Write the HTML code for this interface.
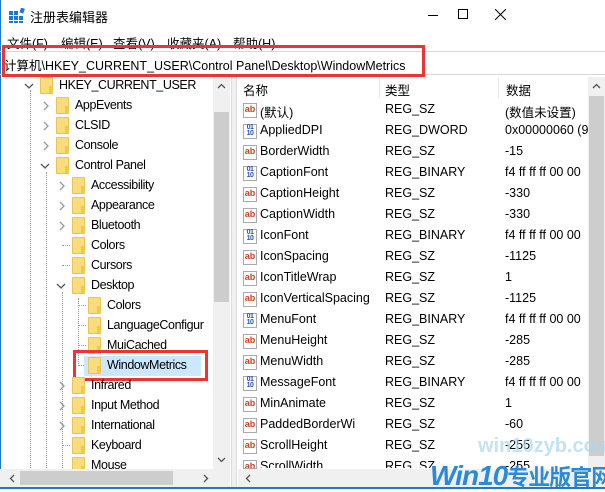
<!DOCTYPE html>
<html><head><meta charset="utf-8"><style>
*{margin:0;padding:0;box-sizing:border-box}
body{width:605px;height:489px;overflow:hidden;background:#fff;font-family:"Liberation Sans","Noto Sans CJK SC",sans-serif;font-size:12.5px;color:#000;position:relative}
.a{position:absolute;white-space:nowrap}
.t{letter-spacing:-0.4px}
.fold{position:absolute;width:13px;height:17px;background:#f8dc7e;border:1px solid #e8c35a;border-radius:1px}
.fold:after{content:"";position:absolute;right:-1px;bottom:-1px;width:4px;height:8px;background:#f0c850;}
.ic{position:absolute;width:14px;height:15px;border:1px solid #aaa;background:#fff;font-size:9px;font-weight:bold;line-height:11px;text-align:center}
.ab{color:#d04020}
.bn{color:#2050c0;font-size:7px;line-height:6px;letter-spacing:-0.5px}
</style></head><body>
<svg width="0" height="0" style="position:absolute"><defs>
<symbol id="cr" viewBox="0 0 10 10"><path d="M3 1L7 5L3 9" fill="none" stroke="#999" stroke-width="1.3"/></symbol>
<symbol id="cd" viewBox="0 0 10 10"><path d="M1 3L5 7L9 3" fill="none" stroke="#555" stroke-width="1.3"/></symbol>
</defs></svg>
<div class="a" style="left:0;top:0;width:1px;height:489px;background:#1a78d0"></div>
<div class="a" style="left:0;top:487px;width:605px;height:2px;background:#1a78d0"></div>
<!-- title -->
<svg class="a" style="left:9px;top:8px" width="16" height="15"><g fill="#1a7ad0"><rect x="0" y="3" width="4" height="4"/><rect x="5" y="3" width="4" height="4"/><rect x="0" y="8" width="4" height="4"/><rect x="5" y="8" width="4" height="4"/><rect x="10" y="8" width="4" height="4"/><rect x="0" y="13" width="4" height="2"/><rect x="5" y="13" width="4" height="2"/><rect x="10" y="13" width="4" height="2"/><rect x="11" y="0" width="4" height="5" transform="rotate(20 13 3)"/></g></svg>
<div class="a" style="left:30px;top:7px;font-size:13px">注册表编辑器</div>
<div class="a" style="left:428px;top:15px;width:10px;height:1px;background:#000"></div>
<div class="a" style="left:458px;top:9px;width:10px;height:10px;border:1px solid #000"></div>
<svg class="a" style="left:495px;top:9px" width="11" height="11"><path d="M0 0L11 11M11 0L0 11" stroke="#000"/></svg>
<!-- menu -->
<div class="a" style="left:7px;top:33px">文件(F)</div>
<div class="a" style="left:61px;top:33px">编辑(E)</div>
<div class="a" style="left:113px;top:33px">查看(V)</div>
<div class="a" style="left:167px;top:33px">收藏夹(A)</div>
<div class="a" style="left:233px;top:33px">帮助(H)</div>
<!-- address -->
<div class="a" style="left:0;top:51px;width:605px;height:24px;border-top:1px solid #d8d8d8;border-bottom:1px solid #d8d8d8"></div>
<div class="a" style="left:4px;top:55px;font-size:12.5px">计算机\HKEY_CURRENT_USER\Control Panel\Desktop\WindowMetrics</div>
<div class="a" style="left:2px;top:45px;width:423px;height:32px;border:3px solid #ee3333"></div>
<!-- splitter -->
<div class="a" style="left:231px;top:77px;width:6px;height:410px;background:#f0f0f0;border-left:1px solid #ddd;border-right:1px solid #ddd"></div>
<!-- tree -->
<div class="a" style="left:30px;top:90px;height:380px;border-left:1px dotted #999"></div>
<div class="a" style="left:46px;top:172px;height:300px;border-left:1px dotted #999"></div>
<div class="a" style="left:62px;top:292px;height:180px;border-left:1px dotted #999"></div>
<div class="a" style="left:78px;top:298px;height:68px;border-left:1px dotted #999"></div>
<div class="a" style="left:62px;top:245px;width:8px;border-top:1px dotted #999"></div>
<div class="a" style="left:62px;top:265px;width:8px;border-top:1px dotted #999"></div>
<div class="a" style="left:62px;top:445px;width:8px;border-top:1px dotted #999"></div>
<div class="a" style="left:78px;top:305px;width:8px;border-top:1px dotted #999"></div>
<div class="a" style="left:78px;top:325px;width:8px;border-top:1px dotted #999"></div>
<div class="a" style="left:78px;top:345px;width:8px;border-top:1px dotted #999"></div>
<div class="a" style="left:78px;top:365px;width:6px;border-top:1px dotted #999"></div>

<svg class="a" style="left:24px;top:81px" width="10" height="10"><use href="#cd"/></svg><div class="fold" style="left:40px;top:77px"></div><div class="a t" style="left:59px;top:78px">HKEY_CURRENT_USER</div>
<svg class="a" style="left:41px;top:101px" width="10" height="10"><use href="#cr"/></svg><div class="fold" style="left:56px;top:97px"></div><div class="a t" style="left:75px;top:98px">AppEvents</div>
<svg class="a" style="left:41px;top:121px" width="10" height="10"><use href="#cr"/></svg><div class="fold" style="left:56px;top:117px"></div><div class="a t" style="left:75px;top:118px">CLSID</div>
<svg class="a" style="left:41px;top:141px" width="10" height="10"><use href="#cr"/></svg><div class="fold" style="left:56px;top:137px"></div><div class="a t" style="left:75px;top:138px">Console</div>
<svg class="a" style="left:40px;top:161px" width="10" height="10"><use href="#cd"/></svg><div class="fold" style="left:56px;top:157px"></div><div class="a t" style="left:75px;top:158px">Control Panel</div>
<svg class="a" style="left:57px;top:181px" width="10" height="10"><use href="#cr"/></svg><div class="fold" style="left:72px;top:177px"></div><div class="a t" style="left:91px;top:178px">Accessibility</div>
<svg class="a" style="left:57px;top:201px" width="10" height="10"><use href="#cr"/></svg><div class="fold" style="left:72px;top:197px"></div><div class="a t" style="left:91px;top:198px">Appearance</div>
<svg class="a" style="left:57px;top:221px" width="10" height="10"><use href="#cr"/></svg><div class="fold" style="left:72px;top:217px"></div><div class="a t" style="left:91px;top:218px">Bluetooth</div>
<div class="fold" style="left:72px;top:237px"></div><div class="a t" style="left:91px;top:238px">Colors</div>
<div class="fold" style="left:72px;top:257px"></div><div class="a t" style="left:91px;top:258px">Cursors</div>
<svg class="a" style="left:56px;top:281px" width="10" height="10"><use href="#cd"/></svg><div class="fold" style="left:72px;top:277px"></div><div class="a t" style="left:91px;top:278px">Desktop</div>
<div class="fold" style="left:88px;top:297px"></div><div class="a t" style="left:107px;top:298px">Colors</div>
<div class="fold" style="left:88px;top:317px"></div><div class="a t" style="left:107px;top:318px;width:106px;overflow:hidden">LanguageConfigur</div>
<div class="fold" style="left:88px;top:337px"></div><div class="a t" style="left:107px;top:338px">MuiCached</div>
<div class="a" style="left:84px;top:356px;width:117px;height:20px;background:#cce8ff"></div>
<div class="fold" style="left:88px;top:357px"></div><div class="a t" style="left:107px;top:358px">WindowMetrics</div>
<div class="a" style="left:73px;top:350px;width:135px;height:31px;border:3px solid #ee3333"></div>
<svg class="a" style="left:57px;top:381px" width="10" height="10"><use href="#cr"/></svg><div class="fold" style="left:72px;top:377px"></div><div class="a t" style="left:91px;top:378px">Infrared</div>
<svg class="a" style="left:57px;top:401px" width="10" height="10"><use href="#cr"/></svg><div class="fold" style="left:72px;top:397px"></div><div class="a t" style="left:91px;top:398px">Input Method</div>
<svg class="a" style="left:57px;top:421px" width="10" height="10"><use href="#cr"/></svg><div class="fold" style="left:72px;top:417px"></div><div class="a t" style="left:91px;top:418px">International</div>
<div class="fold" style="left:72px;top:437px"></div><div class="a t" style="left:91px;top:438px">Keyboard</div>
<div class="fold" style="left:72px;top:457px"></div><div class="a t" style="left:91px;top:458px;height:11px;overflow:hidden">Mouse</div>
<!-- left scrollbar -->
<div class="a" style="left:213px;top:77px;width:17px;height:392px;background:#f0f0f0"></div>
<div class="a" style="left:214px;top:112px;width:15px;height:190px;background:#cdcdcd"></div>
<svg class="a" style="left:217px;top:82px" width="9" height="9"><path d="M1 6L4.5 2.5L8 6" fill="none" stroke="#555" stroke-width="1.3"/></svg>
<svg class="a" style="left:217px;top:455px" width="9" height="9"><path d="M1 3L4.5 6.5L8 3" fill="none" stroke="#555" stroke-width="1.3"/></svg>
<div class="a" style="left:0;top:469px;width:230px;height:18px;background:#f0f0f0"></div>
<div class="a" style="left:20px;top:471px;width:153px;height:14px;background:#cdcdcd"></div>
<svg class="a" style="left:8px;top:474px" width="9" height="9"><path d="M6 1L2.5 4.5L6 8" fill="none" stroke="#555" stroke-width="1.3"/></svg>
<svg class="a" style="left:201px;top:474px" width="9" height="9"><path d="M3 1L6.5 4.5L3 8" fill="none" stroke="#555" stroke-width="1.3"/></svg>
<!-- right header -->
<div class="a" style="left:243px;top:80px">名称</div>
<div class="a" style="left:379px;top:78px;width:1px;height:20px;background:#e5e5e5"></div>
<div class="a" style="left:385px;top:80px">类型</div>
<div class="a" style="left:498px;top:78px;width:1px;height:20px;background:#e5e5e5"></div>
<div class="a" style="left:506px;top:80px">数据</div>
<div id="rows"></div>
<!-- right scrollbar -->
<div class="a" style="left:588px;top:77px;width:17px;height:392px;background:#f0f0f0"></div>
<div class="a" style="left:589px;top:96px;width:15px;height:360px;background:#cdcdcd"></div>
<svg class="a" style="left:592px;top:82px" width="9" height="9"><path d="M1 6L4.5 2.5L8 6" fill="none" stroke="#555" stroke-width="1.3"/></svg>
<div class="a" style="left:238px;top:469px;width:367px;height:18px;background:#f0f0f0"></div>
<svg class="a" style="left:244px;top:474px" width="9" height="9"><path d="M6 1L2.5 4.5L6 8" fill="none" stroke="#555" stroke-width="1.3"/></svg>
<!-- watermark -->
<div class="a" style="left:478px;top:435px;font-size:20px;font-weight:bold;color:#a8d8f0;opacity:.7">win10zyb.com</div>
<div class="a" style="left:430px;top:460px;font-size:28px;font-weight:bold;font-style:italic;color:#2a8ad8;letter-spacing:-1px">Win10<span style="font-size:22px;font-style:normal">专业版官网</span></div>
<script>
var r=[["a","(默认)","REG_SZ","(数值未设置)"],["b","AppliedDPI","REG_DWORD","0x00000060 (9"],["a","BorderWidth","REG_SZ","-15"],["b","CaptionFont","REG_BINARY","f4 ff ff ff 00 00"],["a","CaptionHeight","REG_SZ","-330"],["a","CaptionWidth","REG_SZ","-330"],["b","IconFont","REG_BINARY","f4 ff ff ff 00 00"],["a","IconSpacing","REG_SZ","-1125"],["a","IconTitleWrap","REG_SZ","1"],["a","IconVerticalSpacing","REG_SZ","-1125"],["b","MenuFont","REG_BINARY","f4 ff ff ff 00 00"],["a","MenuHeight","REG_SZ","-285"],["a","MenuWidth","REG_SZ","-285"],["b","MessageFont","REG_BINARY","f4 ff ff ff 00 00"],["a","MinAnimate","REG_SZ","1"],["a","PaddedBorderWi","REG_SZ","-60"],["a","ScrollHeight","REG_SZ","-255"],["a","ScrollWidth","REG_SZ","-255"]];
var h="";r.forEach(function(x,i){var y=102+i*21;var c=i==17?"height:9px;overflow:hidden;":"";
h+='<div class="ic '+(x[0]=="a"?"ab":"bn")+'" style="left:243px;top:'+(y+1)+'px;'+c+'">'+(x[0]=="a"?"ab":"01<br>10")+'</div><div class="a" style="left:260px;top:'+y+'px;'+c+'">'+x[1]+'</div><div class="a" style="left:385px;top:'+y+'px;'+c+'">'+x[2]+'</div><div class="a" style="left:505px;top:'+y+'px;width:83px;overflow:hidden;'+c+'">'+x[3]+'</div>';});
document.getElementById("rows").innerHTML=h;
</script>
</body></html>
